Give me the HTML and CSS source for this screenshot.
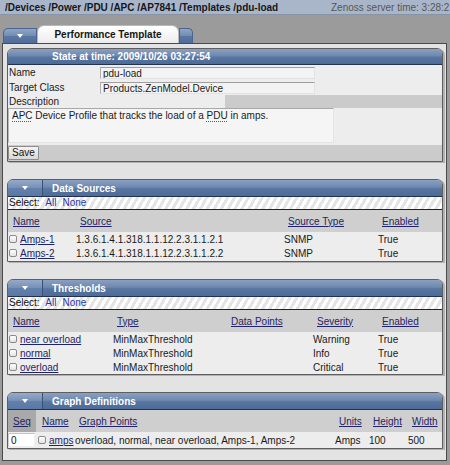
FILE: index.html
```html
<!DOCTYPE html>
<html>
<head>
<meta charset="utf-8">
<title>pdu-load</title>
<link rel="stylesheet" href="styles.css">
</head>
<body>
<div class="topbar">
  <span class="crumbs">/Devices /Power /PDU /APC /AP7841 /Templates /pdu-load</span>
  <span class="srvtime">Zenoss server time: 3:28:2</span>
</div>
<div class="tabs">
  <div class="tab-menu"><span class="tri"></span></div>
  <div class="tab-active">Performance Template</div>
  <div class="tab-end"></div>
</div>
<div class="panel">
  <div class="section">
    <div class="title state-title">State at time: 2009/10/26 03:27:54</div>
    <div class="frow"><div class="flabel">Name</div><div class="fvalue"><input class="field" type="text" value="pdu-load"></div></div>
    <div class="frow"><div class="flabel">Target Class</div><div class="fvalue"><input class="field" type="text" value="Products.ZenModel.Device"></div></div>
    <div class="frow desc-row"><div class="flabel">Description</div><div class="fvalue gray"></div></div>
    <div class="tarow"><div class="textarea"><span class="spell">APC</span> Device Profile that tracks the load of a <span class="spell">PDU</span> in amps.</div></div>
    <div class="saverow"><button class="btn" type="button">Save</button></div>
  </div>

  <div class="section">
    <div class="title"><span class="mtab"><span class="tri"></span></span><span class="ttext">Data Sources</span></div>
    <div class="select">Select: <a class="sel sel-all">All</a><a class="sel sel-none">None</a></div>
    <div class="grid ds head"><span><a>Name</a></span><span><a>Source</a></span><span><a>Source Type</a></span><span><a>Enabled</a></span></div>
    <div class="grid ds row"><span><span class="cb"></span><a>Amps-1</a></span><span>1.3.6.1.4.1.318.1.1.12.2.3.1.1.2.1</span><span>SNMP</span><span>True</span></div>
    <div class="grid ds row"><span><span class="cb"></span><a>Amps-2</a></span><span>1.3.6.1.4.1.318.1.1.12.2.3.1.1.2.2</span><span>SNMP</span><span>True</span></div>
    <div class="endpad"></div>
  </div>

  <div class="section">
    <div class="title"><span class="mtab"><span class="tri"></span></span><span class="ttext">Thresholds</span></div>
    <div class="select">Select: <a class="sel sel-all">All</a><a class="sel sel-none">None</a></div>
    <div class="grid th head"><span><a>Name</a></span><span><a>Type</a></span><span><a>Data Points</a></span><span><a>Severity</a></span><span><a>Enabled</a></span></div>
    <div class="grid th row"><span><span class="cb"></span><a>near overload</a></span><span>MinMaxThreshold</span><span></span><span>Warning</span><span>True</span></div>
    <div class="grid th row"><span><span class="cb"></span><a>normal</a></span><span>MinMaxThreshold</span><span></span><span>Info</span><span>True</span></div>
    <div class="grid th row"><span><span class="cb"></span><a>overload</a></span><span>MinMaxThreshold</span><span></span><span>Critical</span><span>True</span></div>
  </div>

  <div class="section">
    <div class="title"><span class="mtab"><span class="tri"></span></span><span class="ttext">Graph Definitions</span></div>
    <div class="grid gd head"><span class="seqh"><a>Seq</a></span><span class="nameh"><a>Name</a></span><span><a>Graph Points</a></span><span><a>Units</a></span><span><a>Height</a></span><span><a>Width</a></span></div>
    <div class="grid gd grow"><span><input class="seq" type="text" value="0"></span><span class="namec"><span class="cb"></span><a>amps</a></span><span>overload, normal, near overload, Amps-1, Amps-2</span><span>Amps</span><span>100</span><span>500</span></div>
  </div>
</div>
</body>
</html>
```

FILE: styles.css
```css
* { box-sizing: border-box; }
html, body { margin: 0; padding: 0; }
body {
  width: 450px;
  height: 465px;
  overflow: hidden;
  background: #9b9b9b;
  font-family: "Liberation Sans", Arial, sans-serif;
  font-size: 10px;
  color: #1a1a1a;
}
a { color: #1f2468; text-decoration: underline; }

/* top bar */
.topbar {
  height: 15px;
  background: #a9b6c9;
  border-bottom: 1px solid #8793a6;
  display: grid;
  grid-template-columns: 326px 1fr;
  align-items: center;
  padding-left: 5px;
  white-space: nowrap;
  overflow: hidden;
}
.crumbs { font-weight: bold; color: #15171b; }
.srvtime { color: #565656; }

/* tabs */
.tabs {
  height: 28px;
  display: flex;
  align-items: flex-end;
  padding-left: 3px;
}
.tab-menu, .tab-end {
  height: 15px;
  background: linear-gradient(#8fa5c7 0%, #728cb3 48%, #5b78a4 52%, #506d9b 100%);
  border: 1px solid #4b6590;
  border-bottom: none;
}
.tab-menu {
  width: 34px;
  border-radius: 5px 0 0 0;
  display: flex;
  align-items: center;
  justify-content: center;
}
.tab-end { width: 14px; border-radius: 0 5px 0 0; }
.tab-active {
  width: 142px;
  height: 18px;
  border-radius: 7px 7px 0 0;
  background: linear-gradient(#ffffff, #ececec);
  border: 1px solid #b8b8b8;
  border-bottom: none;
  font-weight: bold;
  text-align: center;
  line-height: 17px;
  color: #151515;
}
.tri {
  display: block;
  width: 0;
  height: 0;
  border-left: 3px solid transparent;
  border-right: 3px solid transparent;
  border-top: 4px solid #ffffff;
}

/* panel */
.panel {
  margin-left: 2px;
  width: 445px;
  background: #e3e3e3;
  border: 1px solid #4a4a4a;
  padding: 4px 3px 11px 4px;
}
.section {
  border: 1px solid #5e5e5e;
  border-radius: 6px 6px 0 0;
  overflow: hidden;
  background: #ededed;
  box-shadow: 2px 1px 0 #b2b2b2;
}
.section + .section { margin-top: 17px; }

.title {
  height: 17px;
  border-bottom: 1px solid #22314c;
  background: linear-gradient(#8aa0c2 0%, #6e88af 45%, #58759f 55%, #4d6b99 100%);
  color: #ffffff;
  font-weight: bold;
  display: flex;
  align-items: center;
}
.state-title { height: 16px; padding-left: 44px; }
.mtab {
  width: 35px;
  height: 100%;
  display: flex;
  align-items: center;
  justify-content: center;
  border-right: 1px solid #3a5078;
  background: linear-gradient(#95aacb 0%, #7890b6 48%, #6180ab 52%, #5a78a5 100%);
}
.ttext { margin-left: 9px; }

/* form rows */
.frow { display: flex; height: 15px; }
.flabel { width: 92px; padding-left: 1px; line-height: 15px; }
.fvalue { flex: 1; }
.fvalue.gray { background: #cbcbcb; }
.desc-row { height: 13px; }
.desc-row .flabel { width: 217px; line-height: 13px; }
.field {
  display: block;
  margin: 2px 0 0 0;
  width: 215px;
  height: 12px;
  padding: 0 0 0 2px;
  border: 1px solid;
  border-color: #9e9e9e #e2e2e2 #e2e2e2 #b0b0b0;
  background: #f3f3f3;
  font: 10px "Liberation Sans", Arial, sans-serif;
  color: #1a1a1a;
  outline: none;
}
.tarow { height: 37px; }
.textarea {
  width: 326px;
  height: 35px;
  border: 1px solid;
  border-color: #a8a8a8 #e4e4e4 #e4e4e4 #b8b8b8;
  background: #f5f5f5;
  padding: 1px 0 0 3px;
  line-height: 12px;
}
.spell { text-decoration: underline dotted #e02424; text-underline-offset: 2px; }
.saverow {
  height: 16px;
  background: #cbcbcb;
  padding-top: 1px;
}
.btn {
  display: block;
  width: 31px;
  height: 14px;
  padding: 0;
  border: 1px solid #8c8c8c;
  border-radius: 1px;
  background: linear-gradient(#f4f4f4, #d8d8d8);
  font: 10px "Liberation Sans", Arial, sans-serif;
  color: #111111;
  line-height: 12px;
}

/* select row */
.select {
  height: 13px;
  line-height: 12px;
  padding-left: 1px;
  border-bottom: 1px solid #222222;
  background: repeating-linear-gradient(120deg, #ffffff 0 3px, #e4e4e4 3px 6px);
  overflow: hidden;
  color: #111111;
}
.sel { color: #2a34a6; text-decoration: none; }
.sel-all { margin-left: 3px; }
.sel-none { margin-left: 6px; }

/* tables */
.grid { display: grid; align-items: center; white-space: nowrap; }
.head { height: 22px; background: #cfcfcf; }
.head > span { padding-left: 4px; }
.row { height: 14px; }
.ds { grid-template-columns: 67px 208px 94px 1fr; padding-left: 1px; }
.th { grid-template-columns: 104px 114px 86px 65px 1fr; padding-left: 1px; }
.gd { grid-template-columns: 28px 39px 260px 34px 39px 1fr; }
.ds.row > span:first-child, .th.row > span:first-child { display: flex; align-items: center; }
.endpad { height: 1px; }
.cb {
  display: inline-block;
  width: 8px;
  height: 8px;
  margin-right: 3px;
  border: 1px solid #8a8a8a;
  border-radius: 2px;
  background: linear-gradient(#ffffff, #e3e3e3);
}
.gd.head .seqh { height: 100%; background: #a9a9a9; padding-left: 5px; display: flex; align-items: center; }
.gd.head .nameh { padding-left: 6px; }
.grow { height: 16px; }
.seq {
  display: block;
  width: 27px;
  height: 14px;
  margin: 0;
  padding: 0 0 0 2px;
  border: 1px solid;
  border-color: #c4c4c4 #f0f0f0 #f0f0f0 #cfcfcf;
  background: #ffffff;
  font: 10px "Liberation Sans", Arial, sans-serif;
  color: #111111;
  outline: none;
}
.namec { display: flex; align-items: center; padding-left: 2px; }
```
